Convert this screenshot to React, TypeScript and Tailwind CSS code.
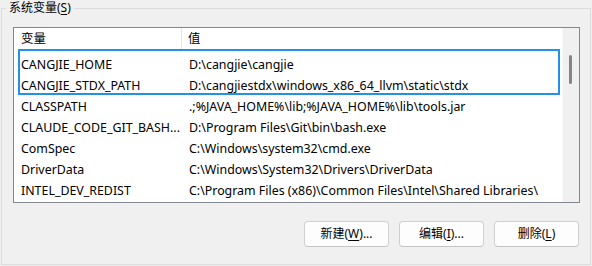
import React from "react";

const rows: [string, string][] = [
  ["CANGJIE_HOME", "D:\\cangjie\\cangjie"],
  ["CANGJIE_STDX_PATH", "D:\\cangjiestdx\\windows_x86_64_llvm\\static\\stdx"],
  ["CLASSPATH", ".;%JAVA_HOME%\\lib;%JAVA_HOME%\\lib\\tools.jar"],
  ["CLAUDE_CODE_GIT_BASH...", "D:\\Program Files\\Git\\bin\\bash.exe"],
  ["ComSpec", "C:\\Windows\\system32\\cmd.exe"],
  ["DriverData", "C:\\Windows\\System32\\Drivers\\DriverData"],
  ["INTEL_DEV_REDIST", "C:\\Program Files (x86)\\Common Files\\Intel\\Shared Libraries\\"],
];

function Btn({ pre, key1, post }: { pre: string; key1: string; post: string }) {
  return (
    <button className="w-[85px] h-[26px] rounded-[4px] border border-[#d0d0d0] border-b-[#c4c4c4] bg-[#fdfdfd] text-[12px] text-black flex items-center justify-center">
      <span>
        {pre}(<span className="underline underline-offset-2">{key1}</span>){post}
      </span>
    </button>
  );
}

export default function App() {
  return (
    <div
      className="w-[592px] h-[266px] bg-[#f0f0f0] overflow-hidden text-black"
      style={{ fontFamily: '"Segoe UI", "Noto Sans", "Noto Sans CJK SC", sans-serif' }}
    >
      <div className="relative ml-[1px] mt-[8px] w-[590px] h-[257px] border border-[#dcdcdc] pl-[11px] pt-[18px]">
        <div className="absolute left-[4px] top-[-9px] px-[3px] bg-[#f0f0f0] text-[12px] leading-[16px]">
          系统变量(<span className="underline underline-offset-2">S</span>)
        </div>
        <div className="relative w-[567px] h-[176px] border border-[#828790] bg-white flex overflow-hidden">
          <div className="flex-1 flex flex-col text-[12.4px]">
            <div className="h-[22px] flex items-center">
              <div className="w-[168px] pl-[7px] h-full flex items-center border-r border-[#e5e5e5]">变量</div>
              <div className="pl-[6px]">值</div>
            </div>
            <div className="pt-[5px] flex flex-col">
              {rows.map(([a, b]) => (
                <div key={a} className="h-[21px] flex items-center whitespace-nowrap">
                  <div className="w-[168px] pl-[7px] overflow-hidden">{a}</div>
                  <div className="pl-[7px]">{b}</div>
                </div>
              ))}
            </div>
          </div>
          <div className="w-[17px] h-full bg-[#f0f0f0] border-l border-[#f8f8f8] relative">
            <div className="absolute left-[6px] top-[27px] w-[3px] h-[29px] rounded-full bg-[#858585]" />
          </div>
          <div className="absolute left-[4px] top-[21px] w-[542px] h-[46px] border-2 border-[#2390ea] pointer-events-none" />
        </div>
        <div className="flex justify-end gap-[10px] mt-[18px] pr-[11px]">
          <Btn pre="新建" key1="W" post="..." />
          <Btn pre="编辑" key1="I" post="..." />
          <Btn pre="删除" key1="L" post="" />
        </div>
      </div>
    </div>
  );
}
